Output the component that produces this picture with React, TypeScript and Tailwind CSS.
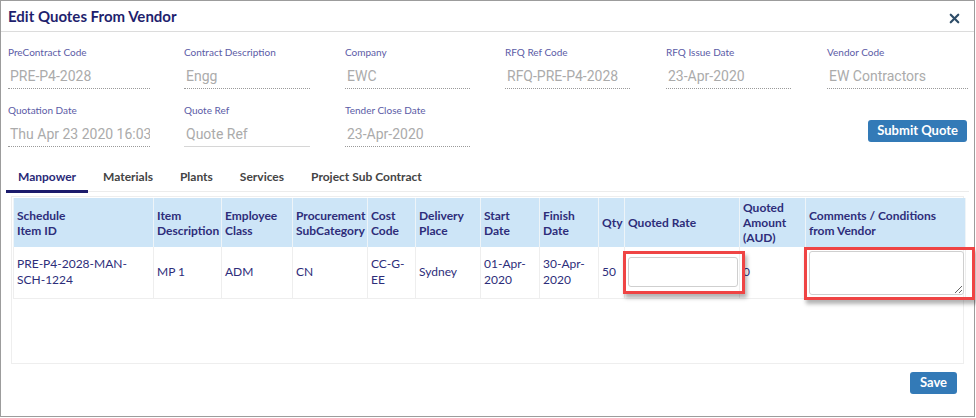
import { X } from "lucide-react";

const lato = "font-['Lato','Liberation_Sans',sans-serif]";
const roboto = "font-['Roboto','Liberation_Sans',sans-serif]";

type FieldProps = { label: string; value: string; width: string; editable?: boolean };

function Field({ label, value, width, editable }: FieldProps) {
  return (
    <div className={width}>
      <div className={`${lato} text-[10px] leading-[12px] text-[#5b5ba6]`}>{label}</div>
      <div
        className={`${roboto} mt-[4px] h-[27px] overflow-hidden whitespace-nowrap pl-[2px] pt-[1px] text-[14px] leading-[26px] text-[#ababab] ${
          editable ? "border-b border-[#d6d6d6]" : "border-b border-dotted border-[#9a9a9a]"
        }`}
      >
        {value}
      </div>
    </div>
  );
}

const tabs = ["Manpower", "Materials", "Plants", "Services", "Project Sub Contract"];

const headers: React.ReactNode[] = [
  <>Schedule<br />Item ID</>,
  "Item Description",
  "Employee Class",
  "Procurement SubCategory",
  "Cost Code",
  "Delivery Place",
  "Start Date",
  "Finish Date",
  "Qty",
  "Quoted Rate",
  "Quoted Amount (AUD)",
  "Comments / Conditions from Vendor",
];

const colWidths = [140, 68, 71, 75, 48, 65, 59, 59, 26, 115, 66, 160];

export default function App() {
  return (
    <div className="h-[418px] w-[976px] bg-white">
      <div className="flex h-[417px] w-[975px] flex-col border border-[#9c9c9c] bg-white">
        {/* header */}
        <div className="flex h-[31px] items-center justify-between border-b border-[#dcdcdc] pl-[7px] pr-[12px]">
          <h1 className={`${lato} text-[15px] font-bold text-[#1f1f6e]`}>Edit Quotes From Vendor</h1>
          <X className="mt-[4px] h-[15px] w-[15px] text-[#2e4d68]" strokeWidth={3.5} />
        </div>

        {/* fields */}
        <div className="pl-[7px] pr-[6px] pt-[14px]">
          <div className="flex">
            <div className="w-[176px]"><Field label="PreContract Code" value="PRE-P4-2028" width="w-[142px]" /></div>
            <div className="w-[161px]"><Field label="Contract Description" value="Engg" width="w-[126px]" /></div>
            <div className="w-[160px]"><Field label="Company" value="EWC" width="w-[125px]" /></div>
            <div className="w-[161px]"><Field label="RFQ Ref Code" value="RFQ-PRE-P4-2028" width="w-[125px]" /></div>
            <div className="w-[161px]"><Field label="RFQ Issue Date" value="23-Apr-2020" width="w-[125px]" /></div>
            <div className="w-[141px]"><Field label="Vendor Code" value="EW Contractors" width="w-[141px]" /></div>
          </div>
          <div className="mt-[15px] flex items-start">
            <div className="w-[176px]"><Field label="Quotation Date" value="Thu Apr 23 2020 16:03:00" width="w-[142px]" /></div>
            <div className="w-[161px]"><Field label="Quote Ref" value="Quote Ref" width="w-[126px]" editable /></div>
            <div className="w-[160px]"><Field label="Tender Close Date" value="23-Apr-2020" width="w-[125px]" /></div>
            <button
              className={`${lato} ml-auto mr-[1px] mt-[16px] h-[22px] rounded-[3px] bg-[#337ab7] px-[9px] text-[13px] font-bold text-white`}
            >
              Submit Quote
            </button>
          </div>
        </div>

        {/* tabs */}
        <div className={`${lato} mx-[5px] mt-[14px] flex gap-[3px] border-b border-[#ececec] text-[12px] font-bold`}>
          {tabs.map((t, i) => (
            <div
              key={t}
              className={`-mb-[2px] h-[32px] px-[12px] pt-[1px] leading-[30px] ${
                i === 0 ? "border-b-[3px] border-[#1b1b6b] text-[#2a2a78]" : "border-b-[3px] border-transparent text-[#444]"
              }`}
            >
              {t}
            </div>
          ))}
        </div>

        {/* table */}
        <div className="mx-[10px] mt-[4px] h-[168px] border border-[#eeeeee] p-[1px] pr-0">
          <table className={`${lato} table-fixed border-collapse text-[12px] text-[#2d2d7a]`} style={{ width: 952 }}>
            <colgroup>
              {colWidths.map((w, i) => (
                <col key={i} style={{ width: w }} />
              ))}
            </colgroup>
            <thead>
              <tr className="h-[49px] bg-[#cde5f7]">
                {headers.map((h, i) => (
                  <th
                    key={i}
                    className="border-x border-[#eef4f8] px-[3px] text-left align-middle font-bold leading-[15px]"
                  >
                    {h}
                  </th>
                ))}
              </tr>
            </thead>
            <tbody>
              <tr className="h-[51px] border-b border-[#eeeeee] leading-[16px]">
                <td className="border-x border-[#eeeeee] px-[3px]">PRE-P4-2028-MAN-SCH-1224</td>
                <td className="border-x border-[#eeeeee] px-[3px]">MP 1</td>
                <td className="border-x border-[#eeeeee] px-[3px]">ADM</td>
                <td className="border-x border-[#eeeeee] px-[3px]">CN</td>
                <td className="border-x border-[#eeeeee] px-[3px]">CC-G-EE</td>
                <td className="border-x border-[#eeeeee] px-[3px]">Sydney</td>
                <td className="border-x border-[#eeeeee] px-[3px]">01-Apr-2020</td>
                <td className="border-x border-[#eeeeee] px-[3px]">30-Apr-2020</td>
                <td className="border-x border-[#eeeeee] px-[3px]">50</td>
                <td className="relative border-x border-[#eeeeee] px-[3px]">
                  <input className="h-[30px] w-[110px] rounded-[3px] border border-[#cfcfcf] bg-white" />
                  <div className="pointer-events-none absolute left-[-2px] top-[4px] h-[43px] w-[122px] border-[3px] border-[#ef4444] shadow-[2px_4px_4px_rgba(0,0,0,0.3)]" />
                </td>
                <td className="border-x border-[#eeeeee] px-[3px]">0</td>
                <td className="relative border-x border-[#eeeeee] px-[3px]">
                  <textarea className="mt-[2px] block h-[44px] w-[155px] rounded-[3px] border border-[#cfcfcf] bg-white" />
                  <div className="pointer-events-none absolute left-[-2px] top-[0px] h-[53px] w-[171px] border-[3px] border-[#ef4444] shadow-[2px_4px_4px_rgba(0,0,0,0.3)]" />
                </td>
              </tr>
            </tbody>
          </table>
        </div>

        {/* footer */}
        <div className="mt-[8px] flex justify-end pr-[17px]">
          <button className={`${lato} h-[22px] w-[47px] rounded-[3px] bg-[#337ab7] text-[13px] font-bold text-white`}>
            Save
          </button>
        </div>
      </div>
    </div>
  );
}
